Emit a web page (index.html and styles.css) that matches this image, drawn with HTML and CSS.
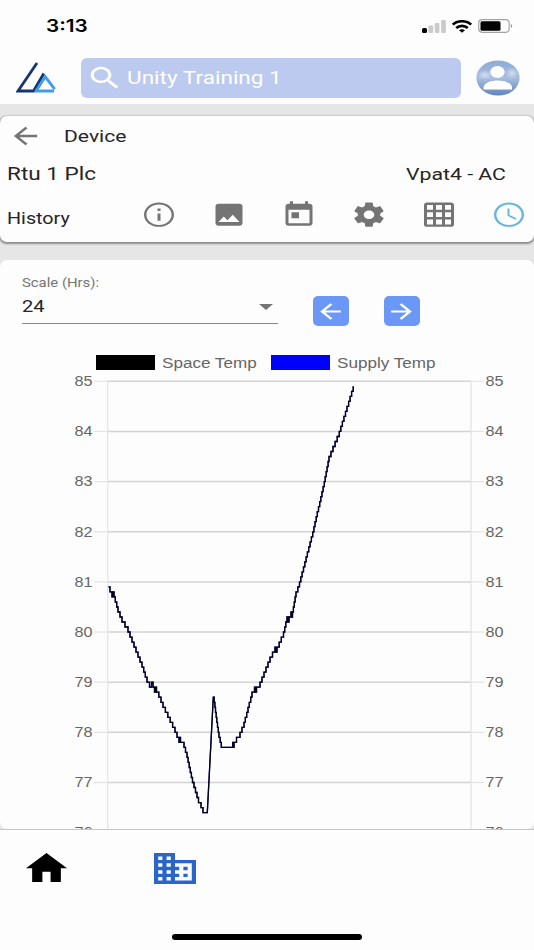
FILE: index.html
```html
<!DOCTYPE html>
<html lang="en">
<head>
    <meta charset="UTF-8">
    <meta name="viewport" content="width=device-width, initial-scale=1.0">
    <title>Device History</title>
    <link rel="stylesheet" href="styles.css">
</head>
<body>
    <div class="app">
        <div class="status-bar">
            <span class="time wide">3:13</span>
            <div class="status-icons">
                <svg class="signal" viewBox="0 0 24 13">
                    <rect x="0" y="8" width="5" height="5" rx="1.5" fill="#000"/>
                    <g fill="#cbcbcb">
                        <rect x="6.4" y="5.5" width="4.8" height="7.5" rx="1"/>
                        <rect x="12.8" y="3" width="4.6" height="10" rx="1"/>
                        <rect x="19.1" y="0" width="4.8" height="13" rx="1"/>
                    </g>
                </svg>
                <svg class="wifi" viewBox="0 0 20 13" fill="none" stroke="#000" stroke-width="2.6">
                    <path d="M.8 4.6C5.6.1 14.4.1 19.2 4.6"/>
                    <path d="M4.2 8C7.5 5.1 12.5 5.1 15.8 8"/>
                    <path d="M7 10.3C8.6 9 11.4 9 13 10.3L10 12.8z" fill="#000" stroke="none"/>
                </svg>
                <svg class="battery" viewBox="0 0 35 14">
                    <rect x=".7" y=".7" width="30.5" height="12.6" rx="3.5" fill="none" stroke="#a5a5a5" stroke-width="1.2"/>
                    <rect x="2.5" y="2.3" width="20" height="9.4" rx="1.5" fill="#000"/>
                    <path d="M32.8 5v4c1.8-.5 1.8-3.5 0-4z" fill="#999"/>
                </svg>
            </div>
        </div>

        <div class="header">
            <svg class="logo" viewBox="0 0 40 31">
                <path d="M21 1L2 29h15.5L27.8 11.500" fill="none" stroke="#163572" stroke-width="2.8"/>
                <path d="M20 29L29.300 14.800l9.400 12.400M18.800 29H38" fill="none" stroke="#429bea" stroke-width="2.8"/>
            </svg>
            <div class="search">
                <svg class="icon-search" viewBox="0 0 24 24" preserveAspectRatio="none"><path d="M15.500 14h-.79l-.28-.27C15.410 12.590 16 11.110 16 9.500 16 5.910 13.090 3 9.500 3S3 5.910 3 9.500 5.910 16 9.500 16c1.610 0 3.090-.59 4.230-1.570l.27.28v.79l5 4.990L20.490 19l-4.990-5zm-6 0C7.010 14 5 11.990 5 9.500S7.010 5 9.500 5 14 7.010 14 9.500 11.990 14 9.500 14z"/></svg>
                <span class="search-text wide">Unity Training 1</span>
            </div>
            <svg class="avatar" viewBox="0 0 44 36">
                <defs>
                    <linearGradient id="sky" x1="0" y1="0" x2="0" y2="1">
                        <stop offset="0" stop-color="#8eaad3"/>
                        <stop offset=".5" stop-color="#a7bee0"/>
                        <stop offset="1" stop-color="#6284bb"/>
                    </linearGradient>
                    <radialGradient id="cloud"><stop offset="0" stop-color="#d2def0"/><stop offset="1" stop-color="#d2def0" stop-opacity="0"/></radialGradient>
                </defs>
                <ellipse cx="22" cy="18" rx="21.600" ry="17.600" fill="url(#sky)"/>
                <ellipse cx="36" cy="13" rx="7" ry="6" fill="url(#cloud)"/>
                <ellipse cx="9" cy="15" rx="8" ry="5" fill="url(#cloud)"/>
                <ellipse cx="21.500" cy="12" rx="7.200" ry="6" fill="#fff"/>
                <path d="M7.500 29.500v-2.500c1-4.500 8-6.500 14.200-6.500S35 22.500 36 27v2.500z" fill="#fff"/>
            </svg>
        </div>

        <div class="card device-card">
            <div class="title-row">
                <svg class="icon-back" viewBox="0 0 24 24" preserveAspectRatio="none"><path d="M20 11H7.830l5.590-5.590L12 4l-8 8 8 8 1.410-1.410L7.830 13H20v-2z"/></svg>
                <span class="title wide">Device</span>
            </div>
            <div class="name-row">
                <span class="device-name wide">Rtu 1 Plc</span>
                <span class="device-type wide">Vpat4 - AC</span>
            </div>
            <div class="tab-row">
                <span class="tab-name wide">History</span>
                <div class="tabs">
                    <svg viewBox="0 0 24 24" preserveAspectRatio="none"><path d="M11 17h2v-6h-2v6zm1-15C6.480 2 2 6.480 2 12s4.480 10 10 10 10-4.480 10-10S17.520 2 12 2zm0 18.400c-4.630 0-8.400-3.770-8.400-8.400S7.370 3.600 12 3.600s8.400 3.770 8.400 8.400-3.770 8.400-8.400 8.400zM11 9h2V7h-2v2z"/></svg>
                    <svg viewBox="0 0 24 24" preserveAspectRatio="none"><path d="M21 19V5c0-1.100-.9-2-2-2H5c-1.100 0-2 .9-2 2v14c0 1.100.9 2 2 2h14c1.100 0 2-.9 2-2zM8.500 13.500l2.500 3.010L14.500 12l4.500 6H5l3.500-4.500z"/></svg>
                    <svg viewBox="0 0 24 24" preserveAspectRatio="none"><path d="M19 3h-1V1h-2v2H8V1H6v2H5c-1.110 0-1.990.9-1.990 2L3 19c0 1.100.89 2 2 2h14c1.100 0 2-.9 2-2V5c0-1.100-.9-2-2-2zm0 16H5V8h14v11zM7 10h5v5H7z"/></svg>
                    <svg viewBox="0 0 24 24" preserveAspectRatio="none"><path d="M19.430 12.980c.04-.32.070-.64.070-.98s-.03-.66-.07-.98l2.110-1.650c.19-.15.24-.42.12-.64l-2-3.460c-.12-.22-.39-.3-.61-.22l-2.490 1c-.52-.4-1.080-.73-1.690-.98l-.38-2.650C14.460 2.180 14.250 2 14 2h-4c-.25 0-.46.18-.49.42l-.38 2.650c-.61.25-1.170.59-1.690.98l-2.490-1c-.23-.09-.49 0-.61.22l-2 3.460c-.13.22-.07.49.12.64l2.110 1.650c-.04.32-.07.65-.07.98s.03.66.07.98l-2.110 1.650c-.19.15-.24.42-.12.64l2 3.460c.12.22.39.3.61.22l2.490-1c.52.4 1.080.73 1.690.98l.38 2.650c.03.24.24.42.49.42h4c.25 0 .46-.18.49-.42l.38-2.650c.61-.25 1.170-.59 1.690-.98l2.490 1c.23.09.49 0 .61-.22l2-3.460c.12-.22.07-.49-.12-.64l-2.110-1.650zM12 15.500c-1.930 0-3.500-1.570-3.500-3.500s1.570-3.500 3.500-3.500 3.500 1.570 3.500 3.500-1.570 3.500-3.500 3.500z"/></svg>
                    <svg viewBox="0 0 24 24" preserveAspectRatio="none"><path d="M20 2H4c-1.100 0-2 .9-2 2v16c0 1.100.9 2 2 2h16c1.100 0 2-.9 2-2V4c0-1.100-.9-2-2-2zM8 20H4v-4h4v4zm0-6H4v-4h4v4zm0-6H4V4h4v4zm6 12h-4v-4h4v4zm0-6h-4v-4h4v4zm0-6h-4V4h4v4zm6 12h-4v-4h4v4zm0-6h-4v-4h4v4zm0-6h-4V4h4v4z"/></svg>
                    <svg class="active" viewBox="0 0 24 24" preserveAspectRatio="none"><path d="M12 2C6.480 2 2 6.480 2 12s4.480 10 10 10 10-4.480 10-10S17.520 2 12 2zm0 18.400c-4.630 0-8.400-3.770-8.400-8.400S7.370 3.600 12 3.600s8.400 3.770 8.400 8.400-3.770 8.400-8.400 8.400zM12.300 7h-1.300v6l5.250 3.150.75-1.130-4.700-2.720z"/></svg>
                </div>
            </div>
        </div>

        <div class="card chart-card">
            <div class="controls">
                <div class="scale-select">
                    <span class="scale-label wide">Scale (Hrs):</span>
                    <div class="scale-value">
                        <span class="wide">24</span>
                        <span class="caret"></span>
                    </div>
                </div>
                <button class="step-button" aria-label="Previous"><svg viewBox="0 0 24 24" preserveAspectRatio="none"><path d="M20 11H7.830l5.590-5.590L12 4l-8 8 8 8 1.410-1.410L7.830 13H20v-2z"/></svg></button>
                <button class="step-button" aria-label="Next"><svg viewBox="0 0 24 24" preserveAspectRatio="none"><path d="M12 4l-1.410 1.410L16.170 11H4v2h12.170l-5.580 5.590L12 20l8-8z"/></svg></button>
            </div>
            <div class="legend">
                <span class="swatch space"></span>
                <span class="legend-text wide">Space Temp</span>
                <span class="swatch supply"></span>
                <span class="legend-text wide">Supply Temp</span>
            </div>
            <svg class="chart" id="chart" width="534" height="457" viewBox="0 373 534 457"></svg>
        </div>

        <div class="bottom-nav">
            <div class="nav-items">
                <svg class="nav-home" viewBox="2 3 20 17" preserveAspectRatio="none"><path d="M10 20v-6h4v6h5v-8h3L12 3 2 12h3v8z"/></svg>
                <svg class="nav-sites" viewBox="2 3 20 18" preserveAspectRatio="none"><path d="M12 7V3H2v18h20V7H12zM6 19H4v-2h2v2zm0-4H4v-2h2v2zm0-4H4V9h2v2zm0-4H4V5h2v2zm4 12H8v-2h2v2zm0-4H8v-2h2v2zm0-4H8V9h2v2zm0-4H8V5h2v2zm10 12h-8v-2h2v-2h-2v-2h2v-2h-2V9h8v10zm-2-8h-2v2h2v-2zm0 4h-2v2h2v-2z"/></svg>
            </div>
            <div class="home-indicator"></div>
        </div>
    </div>
    <script src="chart.js"></script>
</body>
</html>
```
FILE: styles.css
```css
* {
    box-sizing: border-box;
}

body {
    margin: 0;
    background: #fdfdfd;
    font-family: Roboto, "Liberation Sans", sans-serif;
    color: #252525;
}

svg {
    display: block;
    flex-shrink: 0;
}

.app {
    width: 534px;
    height: 950px;
    display: flex;
    flex-direction: column;
    overflow: hidden;
    background: #e6e6e6;
}

/* Stretched lettering used across the whole app */
.wide {
    display: inline-block;
    transform: scaleX(1.22);
    transform-origin: left center;
    white-space: nowrap;
}

.status-bar {
    height: 52px;
    padding: 0 21px 0 46px;
    display: flex;
    justify-content: space-between;
    align-items: center;
    background: #fdfdfd;
}

.time {
    font-family: Inter, "Liberation Sans", sans-serif;
    font-size: 17px;
    font-weight: 600;
    color: #000;
}

.status-icons {
    display: flex;
    align-items: center;
    gap: 6px;
}

.signal {
    width: 24px;
    height: 13px;
}

.wifi {
    width: 20px;
    height: 13px;
}

.battery {
    width: 35px;
    height: 14px;
}

.header {
    height: 52px;
    padding: 0 14px 1px 16px;
    display: flex;
    align-items: center;
    background: #fdfdfd;
}

.logo {
    width: 40px;
    height: 31px;
}

.search {
    width: 380px;
    height: 40px;
    margin: 0 15px 0 25px;
    padding-left: 5px;
    display: flex;
    align-items: center;
    border-radius: 6px;
    background: #bbcaee;
}

.icon-search {
    width: 38px;
    height: 30px;
    fill: #fff;
}

.search-text {
    margin-left: 3px;
    font-size: 18.5px;
    color: #fff;
}

.avatar {
    width: 44px;
    height: 36px;
}

.card {
    border-radius: 7px;
    background: #fdfdfd;
}

.device-card {
    height: 126px;
    margin-top: 12px;
    box-shadow: 0 1px 2px 1px #8b8b8b;
}

.title-row {
    height: 40px;
    padding-left: 8px;
    display: flex;
    align-items: center;
}

.icon-back {
    width: 35px;
    height: 28px;
    fill: #747474;
}

.title {
    margin-left: 21px;
    font-size: 17.3px;
}

.name-row {
    height: 36px;
    padding: 0 47px 0 7px;
    display: flex;
    justify-content: space-between;
    align-items: center;
}

.device-name {
    font-size: 18.5px;
}

.device-type {
    font-size: 17.3px;
    transform: scaleX(1.23);
}

.tab-row {
    height: 46px;
    padding: 0 7px 0 7px;
    display: flex;
    justify-content: space-between;
    align-items: center;
}

.tab-name {
    padding-top: 6px;
    font-size: 16.2px;
}

.tabs {
    display: flex;
    gap: 34px;
}

.tabs svg {
    width: 36px;
    height: 29.3px;
    fill: #747474;
}

.tabs .active {
    fill: #67b4df;
}

.chart-card {
    flex: 1;
    min-height: 0;
    margin-top: 18px;
    overflow: hidden;
}

.controls {
    height: 64px;
    padding-left: 21.5px;
    display: flex;
    align-items: flex-end;
}

.scale-select {
    width: 256px;
    height: 48px;
    display: flex;
    flex-direction: column;
    border-bottom: 1px solid #898989;
    margin-right: 35px;
}

.scale-label {
    font-size: 12.2px;
    line-height: 15px;
    color: #757575;
}

.scale-value {
    height: 31px;
    display: flex;
    justify-content: space-between;
    align-items: center;
    font-size: 16.5px;
}

.caret {
    margin-right: 5px;
    border: 7.5px solid transparent;
    border-top: 6px solid #747474;
    border-bottom: 0;
}

.step-button {
    width: 36px;
    height: 30px;
    margin: 0 35px -2px 0;
    padding: 0;
    display: flex;
    justify-content: center;
    align-items: center;
    border: none;
    border-radius: 5px;
    background: #6b97f7;
}

.step-button svg {
    width: 31px;
    height: 25px;
    fill: #fff;
}

.legend {
    height: 49px;
    padding: 28px 0 0 96px;
    display: flex;
    align-items: center;
    font-family: "Liberation Sans", sans-serif;
    font-size: 14px;
    color: #666;
}

.legend-text {
    width: 79px;
    margin-right: 30px;
}

.swatch {
    width: 59px;
    height: 15px;
    margin-right: 7px;
}

.space {
    background: #000;
}

.supply {
    background: #00f;
}

.chart text {
    font-family: "Liberation Sans", sans-serif;
    font-size: 14px;
    fill: #666;
}

.chart .grid {
    stroke: #d3d3d3;
    stroke-width: 1.5;
}

.chart .tick,
.chart .axis {
    stroke: #e5e5e5;
    stroke-width: 1.3;
}

.chart .series {
    fill: none;
    stroke-width: 1.3;
}

.bottom-nav {
    height: 121px;
    padding-bottom: 10px;
    display: flex;
    flex-direction: column;
    justify-content: space-between;
    align-items: center;
    border-top: 1px solid #c5c5c5;
    background: #fdfdfd;
}

.nav-items {
    width: 100%;
    padding: 23px 0 0 26px;
    display: flex;
    gap: 86.5px;
}

.nav-home {
    width: 41px;
    height: 29px;
    fill: #000;
}

.nav-sites {
    width: 42px;
    height: 31px;
    fill: #2966c8;
}

.home-indicator {
    width: 190px;
    height: 6px;
    border-radius: 3px;
    background: #000;
}
```
FILE: chart.js
```js
const chart = document.getElementById('chart');
const top85 = 381.3;
const perDegree = 50.15;
const yFor = temp => top85 + (85 - temp) * perDegree;

let markup = '';
for (let temp = 85; temp >= 76; temp--) {
    const y = yFor(temp);
    markup += `<line class="tick" x1="94" x2="108" y1="${y}" y2="${y}"/>`;
    markup += `<line class="tick" x1="471" x2="484" y1="${y}" y2="${y}"/>`;
    markup += `<line class="grid" x1="108" x2="471" y1="${y}" y2="${y}"/>`;
    markup += `<text x="74.5" y="${y + 4.8}" textLength="18" lengthAdjust="spacingAndGlyphs">${temp}</text>`;
    markup += `<text x="485.5" y="${y + 4.8}" textLength="18" lengthAdjust="spacingAndGlyphs">${temp}</text>`;
}
markup += '<line class="axis" x1="107.7" x2="107.7" y1="381" y2="840"/>';
markup += '<line class="axis" x1="471" x2="471" y1="381" y2="840"/>';

// [x, temperature], readings move in steps of 0.1 between these
const falling = [
    [108.5, 80.9], [110, 80.8], [112, 80.7], [112.7, 80.8], [114, 80.7], [118, 80.4], [122, 80.2], [128, 80],
    [132, 79.8], [136, 79.6], [142, 79.3], [147, 79], [149.5, 78.9], [151.5, 79], [153, 78.9], [154.5, 78.8],
    [155.5, 78.9], [156.5, 78.8], [161, 78.6], [163, 78.5], [175, 78], [177, 77.9], [179, 77.8], [179.6, 77.9],
    [180.5, 77.8], [184, 77.7], [187, 77.5], [192.5, 77], [198.5, 76.6], [201, 76.5], [203, 76.4], [207.3, 76.4]
];
const rising = [
    [213.3, 78.7], [214.2, 78.6], [217.5, 78.1], [219, 77.9], [221.3, 77.7], [232, 77.7], [232.8, 77.8],
    [233.5, 77.7], [234, 77.8], [236.5, 77.9], [240, 78], [244, 78.2], [248, 78.5], [252, 78.8], [254.5, 78.9],
    [255.5, 78.8], [256.5, 78.9], [260, 79], [266, 79.3], [270, 79.5], [275, 79.7], [276, 79.6], [277, 79.7],
    [283.5, 80], [287, 80.3], [288, 80.2], [289, 80.3], [291, 80.4], [291.8, 80.3], [292.5, 80.4], [296, 80.8],
    [299.5, 81], [312.7, 82], [324.3, 83], [329, 83.5], [333, 83.7], [339.3, 84], [347, 84.5], [353.2, 84.9]
];

function steps(points) {
    let path = '';
    for (let i = 1; i < points.length; i++) {
        const [x0, t0] = points[i - 1];
        const [x1, t1] = points[i];
        const count = Math.max(1, Math.round(Math.abs(t1 - t0) * 10));
        for (let k = 1; k <= count; k++) {
            path += `H${(x0 + (x1 - x0) * k / count).toFixed(1)}V${yFor(t0 + (t1 - t0) * k / count).toFixed(1)}`;
        }
    }
    return path;
}

const line = `M${falling[0][0]} ${yFor(falling[0][1])}${steps(falling)}L${rising[0][0]} ${yFor(rising[0][1])}${steps(rising)}`;
markup += `<path class="series" stroke="#0000a0" d="${line}"/>`;
markup += `<path class="series" stroke="#000" stroke-opacity=".85" d="${line}"/>`;
chart.innerHTML = markup;
```
